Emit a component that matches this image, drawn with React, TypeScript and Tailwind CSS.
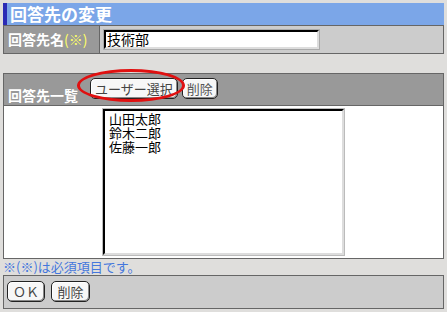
import React from "react";

const font = { fontFamily: '"MS Gothic", "Noto Sans CJK JP", sans-serif' };

const Btn = ({ children, className = "" }: { children: React.ReactNode; className?: string }) => (
  <button
    className={`h-[21px] px-[4px] rounded-[5px] border border-[#222] bg-[#f7f7f7] text-[13px] leading-none text-[#444] shadow-[inset_-1px_-1px_0_#888,inset_1px_1px_0_#fff] ${className}`}
  >
    {children}
  </button>
);

const App = () => {
  return (
    <div
      className="w-[447px] h-[312px] bg-[#dfdedc] px-[3px] pt-[3px] text-[13px]"
      style={font}
    >
      <div className="h-[22px] bg-[#7ba6e8] border-l-[4px] border-[#2b2bb5] pl-[3px] flex items-center text-white font-bold text-[17px]">
        回答先の変更
      </div>

      <div className="flex h-[29px] border border-[#666]">
        <div className="w-[96px] bg-[#999] border-r border-[#666] flex items-center pl-[4px] text-white font-bold text-[14px]">
          回答先名<span className="text-[#ffff66] font-normal">(※)</span>
        </div>
        <div className="flex-1 bg-[#ccc] flex items-center pl-[4px]">
          <input
            defaultValue="技術部"
            className="w-[215px] h-[19px] bg-white border-2 border-t-black border-l-black border-r-[#ddd] border-b-[#ddd] outline outline-1 outline-[#aaa] px-[1px] text-[14px] text-black"
            style={font}
          />
        </div>
      </div>

      <div className="h-[19px]" />

      <div className="border border-[#666]">
        <div className="h-[32px] bg-[#999] border-b border-[#666] flex items-center">
          <div className="w-[86px] pl-[4px] pt-[12px] text-white font-bold text-[14px]">回答先一覧</div>
          <div className="relative flex gap-[4px] pb-[3px]">
            <Btn>ユーザー選択</Btn>
            <Btn className="text-[#555]">削除</Btn>
            <div className="absolute left-[-13px] top-[-9px] w-[108px] h-[33px] rounded-[50%] border-[3px] border-[#e01010]" />
          </div>
        </div>
        <div className="h-[152px] bg-white pl-[99px] pt-[3px]">
          <div className="w-[241px] h-[146px] border-2 border-t-black border-l-black border-r-[#ddd] border-b-[#ddd] outline outline-1 outline-[#bbb] px-[4px] pt-[1px] leading-[14px] text-black">
            <div>山田太郎</div>
            <div>鈴木二郎</div>
            <div>佐藤一郎</div>
          </div>
        </div>
      </div>

      <div className="h-[16px] flex items-center text-[#4477dd] text-[13px]">※(※)は必須項目です。</div>

      <div className="h-[34px] bg-[#ccc] border border-[#666] flex items-center gap-[6px] pl-[3px] pb-[2px]">
        <Btn className="w-[38px] text-[#333]">ＯＫ</Btn>
        <Btn className="w-[39px] text-[#333]">削除</Btn>
      </div>
    </div>
  );
};

export default App;
